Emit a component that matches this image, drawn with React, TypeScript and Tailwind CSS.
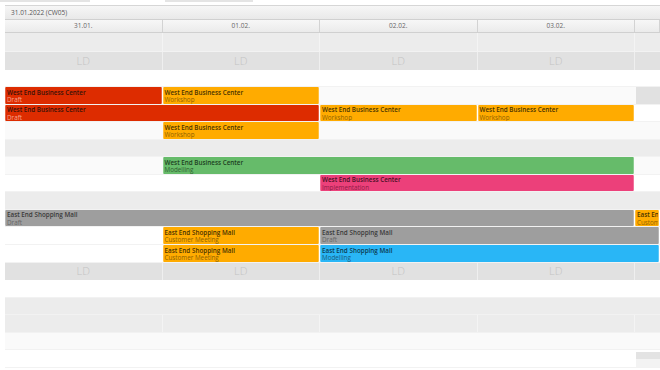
import React from "react";

type Ev = { col: number; span: number; bg: string; title: string; sub: string; tc: string; sc: string };

const RED = { bg: "bg-[#dd2c00]", tc: "text-[#3a1208]", sc: "text-[#f5a48e]" };
const ORA = { bg: "bg-[#ffab00]", tc: "text-[#4a3300]", sc: "text-[#8f6200]" };
const GRN = { bg: "bg-[#66bb6a]", tc: "text-[#1d3f1f]", sc: "text-[#2f6131]" };
const PNK = { bg: "bg-[#ec407a]", tc: "text-[#4a0f26]", sc: "text-[#8e1d46]" };
const GRY = { bg: "bg-[#9e9e9e]", tc: "text-[#3a3a3a]", sc: "text-[#666666]" };
const BLU = { bg: "bg-[#29b6f6]", tc: "text-[#0c3a50]", sc: "text-[#1a5b7a]" };

const WEBC = "West End Business Center";
const EESM = "East End Shopping Mall";

function mk(col: number, span: number, c: { bg: string; tc: string; sc: string }, title: string, sub: string): Ev {
  return { col, span, bg: c.bg, tc: c.tc, sc: c.sc, title, sub };
}

const colStart = ["col-start-1", "col-start-2", "col-start-3", "col-start-4", "col-start-5"];
const colSpan = ["", "col-span-1", "col-span-2", "col-span-3", "col-span-4", "col-span-5"];

function EventBox({ e }: { e: Ev }) {
  return (
    <div
      className={`${colStart[e.col - 1]} ${colSpan[e.span]} row-start-1 ${e.bg} mr-px border-x border-white/25 rounded-[1px] overflow-hidden whitespace-nowrap pl-px pt-[1.5px]`}
    >
      <div className={`text-[6.3px] leading-[7.5px] font-semibold ${e.tc}`}>{e.title}</div>
      <div className={`text-[6.3px] leading-[7.5px] ${e.sc}`}>{e.sub}</div>
    </div>
  );
}

const GRID = "grid grid-cols-[157.5px_157.5px_157.5px_157.5px_1fr]";

function Row({
  bg,
  events = [],
  lines = "",
  last = "",
  h = "h-[17.55px]",
}: {
  bg: string;
  events?: Ev[];
  lines?: string;
  last?: React.ReactNode;
  h?: string;
}) {
  return (
    <div className={`${GRID} ${h} ${bg} border-b border-[#f2f2f2]`}>
      {[1, 2, 3, 4].map((c) => (
        <div key={c} className={`${colStart[c - 1]} row-start-1 ${lines}`} />
      ))}
      <div className="col-start-5 row-start-1">{last}</div>
      {events.map((e, i) => (
        <EventBox key={i} e={e} />
      ))}
    </div>
  );
}

function LDRow() {
  return (
    <div className={`${GRID} h-[17.55px] bg-[#e1e1e1]`}>
      {[0, 1, 2, 3].map((c) => (
        <div
          key={c}
          className="flex items-center justify-center border-r border-[#efefef] text-[11px] font-light text-[#c3c3c3]"
        >
          LD
        </div>
      ))}
      <div />
    </div>
  );
}

export default function App() {
  return (
    <div className="w-[660px] h-[370px] overflow-hidden bg-white" style={{ fontFamily: "'Open Sans', 'Noto Sans', sans-serif" }}>
      <div className="h-[5px] flex">
        <div className="w-[90px] h-[2px] bg-[#e4e4e4]" />
        <div className="w-[75px]" />
        <div className="w-[88px] h-[2px] bg-[#e4e4e4]" />
      </div>
      <div className="pl-[5px]">
        <div className="h-[14px] border-t border-[#d6d6d6] bg-gradient-to-b from-[#f6f6f6] to-[#e9e9e9] flex items-center pl-[6px] text-[6.5px] text-[#555]">
          31.01.2022 (CW05)
        </div>
        <div className={`${GRID} h-[14px] border-t border-[#d0d0d0] border-b bg-gradient-to-b from-[#f7f7f7] to-[#ebebeb]`}>
          {["31.01.", "01.02.", "02.02.", "03.02.", ""].map((d, i) => (
            <div key={i} className="flex items-center justify-center border-r border-[#d3d3d3] text-[6.5px] text-[#666]">
              {d}
            </div>
          ))}
        </div>
        <Row bg="bg-[#ececec]" lines="border-r border-[#f4f4f4]" h="h-[19px]" />
        <LDRow />
        <Row bg="bg-white" />
        <Row
          bg="bg-[#fafafa]"
          events={[mk(1, 1, RED, WEBC, "Draft"), mk(2, 1, ORA, WEBC, "Workshop")]}
          last={<div className="h-full ml-px bg-[#e1e1e1]" />}
        />
        <Row
          bg="bg-white"
          events={[mk(1, 2, RED, WEBC, "Draft"), mk(3, 1, ORA, WEBC, "Workshop"), mk(4, 1, ORA, WEBC, "Workshop")]}
        />
        <Row bg="bg-[#fafafa]" events={[mk(2, 1, ORA, WEBC, "Workshop")]} />
        <Row bg="bg-[#ececec]" />
        <Row bg="bg-[#fafafa]" events={[mk(2, 3, GRN, WEBC, "Modelling")]} />
        <Row bg="bg-white" events={[mk(3, 2, PNK, WEBC, "Implementation")]} />
        <Row bg="bg-[#ececec]" />
        <Row bg="bg-white" events={[mk(1, 4, GRY, EESM, "Draft"), mk(5, 1, ORA, EESM, "Customer Meeting")]} />
        <Row bg="bg-white" events={[mk(2, 1, ORA, EESM, "Customer Meeting"), mk(3, 3, GRY, EESM, "Draft")]} />
        <Row bg="bg-white" events={[mk(2, 1, ORA, EESM, "Customer Meeting"), mk(3, 3, BLU, EESM, "Modelling")]} />
        <LDRow />
        <Row bg="bg-white" />
        <Row bg="bg-[#ececec]" />
        <Row bg="bg-[#ececec]" lines="border-r border-[#f4f4f4]" />
        <Row bg="bg-[#fafafa]" />
        <Row
          bg="bg-white"
          last={
            <div className="h-full ml-px flex flex-col">
              <div className="h-[7px] mt-[2px] bg-[#e3e3e3]" />
              <div className="flex-1 bg-[#f3f3f3]" />
            </div>
          }
        />
      </div>
    </div>
  );
}
